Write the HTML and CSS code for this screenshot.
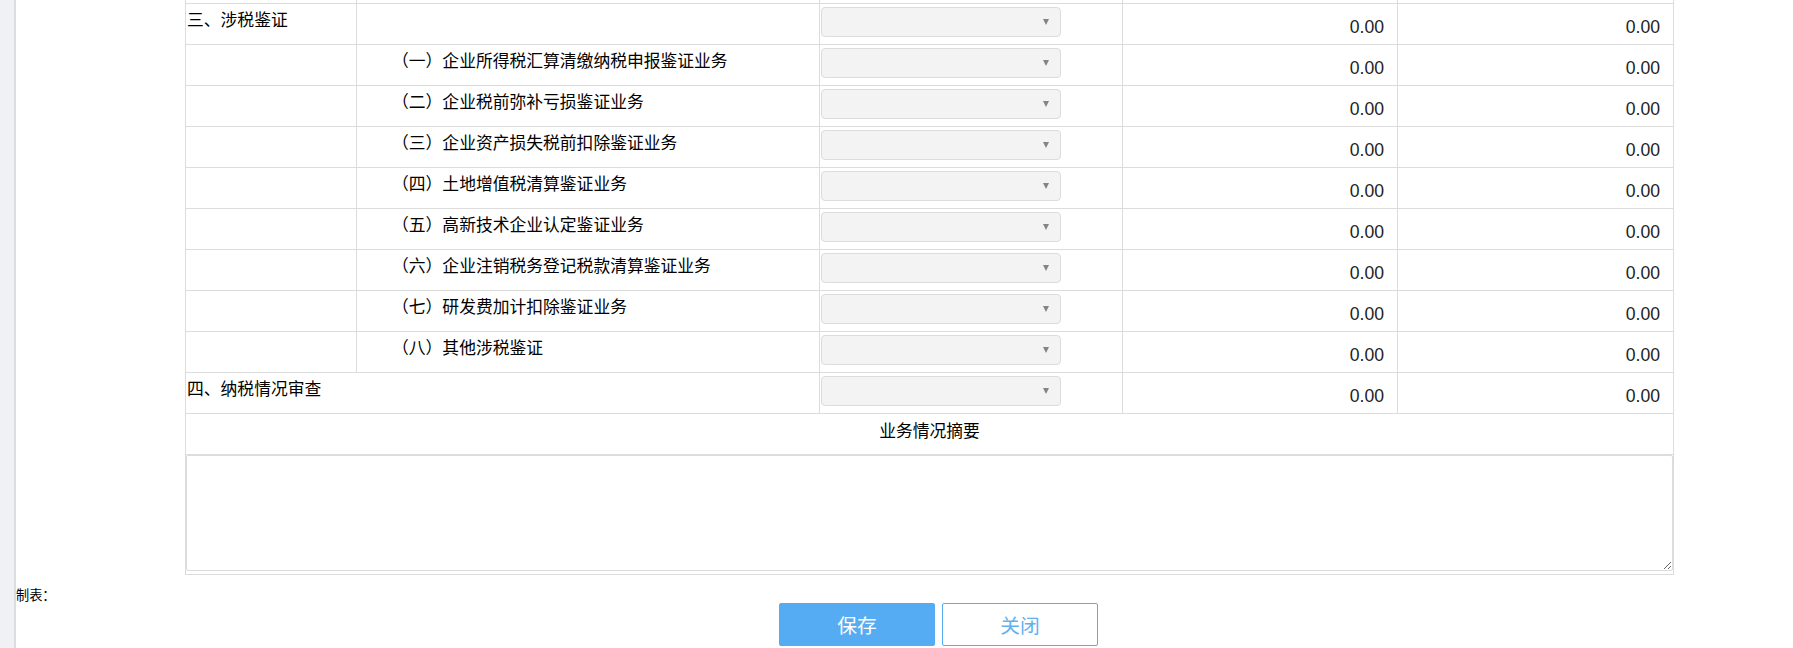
FILE: index.html
```html
<!DOCTYPE html>
<html lang="zh-CN">
<head>
<meta charset="utf-8">
<title>涉税鉴证</title>
<link rel="stylesheet" href="styles.css">
</head>
<body>
<div class="page">
  <div class="side"></div>
  <div class="main">
    <div class="sheet">
      <table class="grid">
        <colgroup>
          <col class="c1"><col class="c2"><col class="c3"><col class="c4"><col class="c5">
        </colgroup>
        <tr class="stub"><td></td><td></td><td></td><td></td><td></td></tr>
        <tr>
          <td><div class="lbl">三、涉税鉴证</div></td>
          <td></td>
          <td><div class="sel"><span class="caret"></span></div></td>
          <td><div class="num">0.00</div></td>
          <td><div class="num">0.00</div></td>
        </tr>
        <tr>
          <td></td>
          <td><div class="lbl sub">（一）企业所得税汇算清缴纳税申报鉴证业务</div></td>
          <td><div class="sel"><span class="caret"></span></div></td>
          <td><div class="num">0.00</div></td>
          <td><div class="num">0.00</div></td>
        </tr>
        <tr>
          <td></td>
          <td><div class="lbl sub">（二）企业税前弥补亏损鉴证业务</div></td>
          <td><div class="sel"><span class="caret"></span></div></td>
          <td><div class="num">0.00</div></td>
          <td><div class="num">0.00</div></td>
        </tr>
        <tr>
          <td></td>
          <td><div class="lbl sub">（三）企业资产损失税前扣除鉴证业务</div></td>
          <td><div class="sel"><span class="caret"></span></div></td>
          <td><div class="num">0.00</div></td>
          <td><div class="num">0.00</div></td>
        </tr>
        <tr>
          <td></td>
          <td><div class="lbl sub">（四）土地增值税清算鉴证业务</div></td>
          <td><div class="sel"><span class="caret"></span></div></td>
          <td><div class="num">0.00</div></td>
          <td><div class="num">0.00</div></td>
        </tr>
        <tr>
          <td></td>
          <td><div class="lbl sub">（五）高新技术企业认定鉴证业务</div></td>
          <td><div class="sel"><span class="caret"></span></div></td>
          <td><div class="num">0.00</div></td>
          <td><div class="num">0.00</div></td>
        </tr>
        <tr>
          <td></td>
          <td><div class="lbl sub">（六）企业注销税务登记税款清算鉴证业务</div></td>
          <td><div class="sel"><span class="caret"></span></div></td>
          <td><div class="num">0.00</div></td>
          <td><div class="num">0.00</div></td>
        </tr>
        <tr>
          <td></td>
          <td><div class="lbl sub">（七）研发费加计扣除鉴证业务</div></td>
          <td><div class="sel"><span class="caret"></span></div></td>
          <td><div class="num">0.00</div></td>
          <td><div class="num">0.00</div></td>
        </tr>
        <tr>
          <td></td>
          <td><div class="lbl sub">（八）其他涉税鉴证</div></td>
          <td><div class="sel"><span class="caret"></span></div></td>
          <td><div class="num">0.00</div></td>
          <td><div class="num">0.00</div></td>
        </tr>
        <tr>
          <td colspan="2"><div class="lbl">四、纳税情况审查</div></td>
          <td><div class="sel"><span class="caret"></span></div></td>
          <td><div class="num">0.00</div></td>
          <td><div class="num">0.00</div></td>
        </tr>
        <tr>
          <td colspan="5"><div class="lbl center">业务情况摘要</div></td>
        </tr>
        <tr class="memo">
          <td colspan="5"><textarea class="memo-box"></textarea></td>
        </tr>
      </table>
    </div>
    <div class="maker">制表：</div>
    <div class="actions">
      <button class="btn save" type="button">保存</button>
      <button class="btn close" type="button">关闭</button>
    </div>
  </div>
</div>
</body>
</html>
```

FILE: styles.css
```css
html, body {
  margin: 0;
  padding: 0;
  background: #ffffff;
  overflow: hidden;
}

body {
  font-family: "Liberation Sans", "Noto Sans CJK SC", sans-serif;
  color: #000;
}

.page {
  display: flex;
  height: 648px;
}

.side {
  flex: none;
  width: 14px;
  background: #f0f1f5;
  border-right: 2px solid #dcdde3;
}

.main {
  flex: 1;
  min-width: 0;
}

.sheet {
  padding-left: 169px;
}

.grid {
  border-collapse: collapse;
  table-layout: fixed;
  width: 1488px;
  font-size: 17.6px;
}

.c1 { width: 171px; }
.c2 { width: 463px; }
.c3 { width: 303px; }
.c4 { width: 275px; }
.c5 { width: 276px; }

.grid td {
  border: 1px solid #dcdcdc;
  padding: 0;
  height: 40px;
  vertical-align: top;
}

.grid .stub td {
  height: 3px;
  border-top: 0;
}

.lbl {
  font-family: "Noto Sans CJK SC", sans-serif;
  font-size: 16.8px;
  padding: 3px 0 0 1px;
  line-height: 25px;
  white-space: nowrap;
  color: #000;
}

.lbl.sub {
  padding-left: 35px;
}

.lbl.center {
  text-align: center;
  padding-left: 0;
  padding-top: 4px;
}

.sel {
  box-sizing: border-box;
  width: 240px;
  height: 30px;
  margin: 3px 0 0 1px;
  border: 1px solid #dcdcdc;
  border-radius: 4px;
  background: #f3f3f3;
  display: flex;
  align-items: center;
  justify-content: flex-end;
  padding-right: 11px;
}

.caret {
  width: 0;
  height: 0;
  border-left: 3.5px solid transparent;
  border-right: 3.5px solid transparent;
  border-top: 6px solid #848484;
}

.num {
  font-family: "Liberation Sans", sans-serif;
  text-align: right;
  padding: 13px 13px 0 0;
  line-height: 20px;
  color: #222;
}

.grid .memo td {
  height: auto;
}

.memo-box {
  display: block;
  box-sizing: border-box;
  width: 100%;
  height: 116px;
  margin: 0 0 3px 0;
  border: 1px solid #dcdcdc;
  border-radius: 2px;
  padding: 2px;
  font: inherit;
  background: #fff;
}

.maker {
  font-family: "Noto Sans CJK SC", sans-serif;
  font-size: 13.2px;
  line-height: 19px;
  margin-top: 10px;
  color: #000;
}

.actions {
  display: flex;
  gap: 7px;
  padding-left: 763px;
  margin-top: -1px;
}

.btn {
  box-sizing: border-box;
  width: 156px;
  height: 43px;
  border: 1px solid #56acf2;
  border-radius: 2px;
  font-family: "Noto Sans CJK SC", sans-serif;
  font-size: 19.8px;
  display: flex;
  align-items: center;
  justify-content: center;
  padding: 0;
  cursor: pointer;
}

.save {
  background: #56acf2;
  color: #ffffff;
}

.close {
  background: #ffffff;
  color: #62b0f0;
}
```
